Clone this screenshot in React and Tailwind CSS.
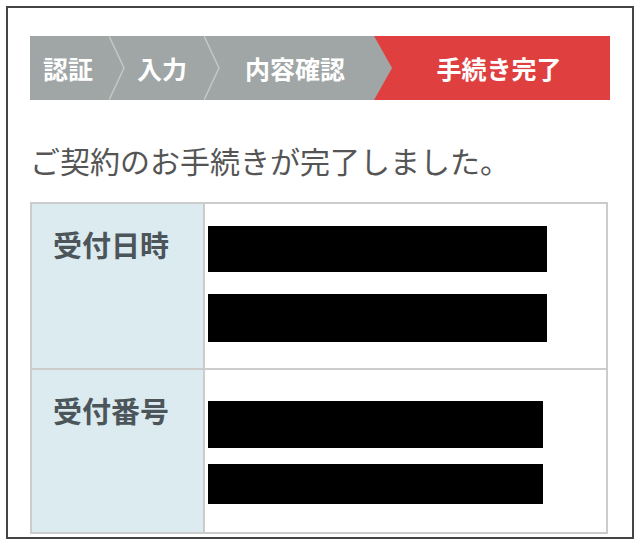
import React from 'react';

const font = { fontFamily: '"Noto Sans CJK JP", "Noto Sans", sans-serif' };

function Separator() {
  return (
    <svg width="16" height="64" viewBox="0 0 16 64" className="shrink-0">
      <polyline points="0,0 15,32 0,64" fill="none" stroke="#c3c7c6" strokeWidth="1.5" />
    </svg>
  );
}

function Steps() {
  return (
    <div className="flex h-[64px] items-stretch bg-[#a0a6a5] text-white font-bold text-[25px] leading-none">
      <div className="flex items-center pl-[13px] pr-[16px]">認証</div>
      <Separator />
      <div className="flex items-center pl-[12px] pr-[17px]">入力</div>
      <Separator />
      <div className="flex items-center pl-[25px] w-[154px]">内容確認</div>
      <div className="relative flex-1 flex items-center justify-center pl-[14px] bg-[#e03f3f] [clip-path:polygon(0_0,100%_0,100%_100%,0_100%,18px_50%)]">
        手続き完了
      </div>
    </div>
  );
}

function Row({ label, bars, last }) {
  return (
    <div className={'grid grid-cols-[171px_1fr] ' + (last ? 'h-[162px]' : 'h-[166px] border-b-2 border-[#cccccc]')}>
      <div className="bg-[#dbebf0] pl-[21px] pt-[26px] text-[29px] leading-[29px] font-bold text-[#4c555a]">{label}</div>
      <div className="border-l-2 border-[#cccccc] bg-white pl-[3px]">
        {bars.map((b, i) => (
          <div key={i} className="bg-black" style={{ width: b.w, height: b.h, marginTop: b.mt }} />
        ))}
      </div>
    </div>
  );
}

export default function App() {
  return (
    <div className="w-[640px] h-[546px] bg-white pt-[6px] pl-[6px]" style={font}>
      <div className="w-[628px] h-[533px] border-2 border-[#444444] px-[22px] pt-[28px]">
        <Steps />
        <p className="mt-[45px] text-[30px] leading-[30px] text-[#555555] whitespace-nowrap">ご契約のお手続きが完了しました。</p>
        <div className="mt-[27px] mr-[2px] border-2 border-[#cccccc]">
          <Row
            label="受付日時"
            bars={[
              { w: 339, h: 46, mt: 22 },
              { w: 339, h: 48, mt: 22 },
            ]}
          />
          <Row
            label="受付番号"
            last
            bars={[
              { w: 335, h: 47, mt: 31 },
              { w: 335, h: 40, mt: 16 },
            ]}
          />
        </div>
      </div>
    </div>
  );
}
